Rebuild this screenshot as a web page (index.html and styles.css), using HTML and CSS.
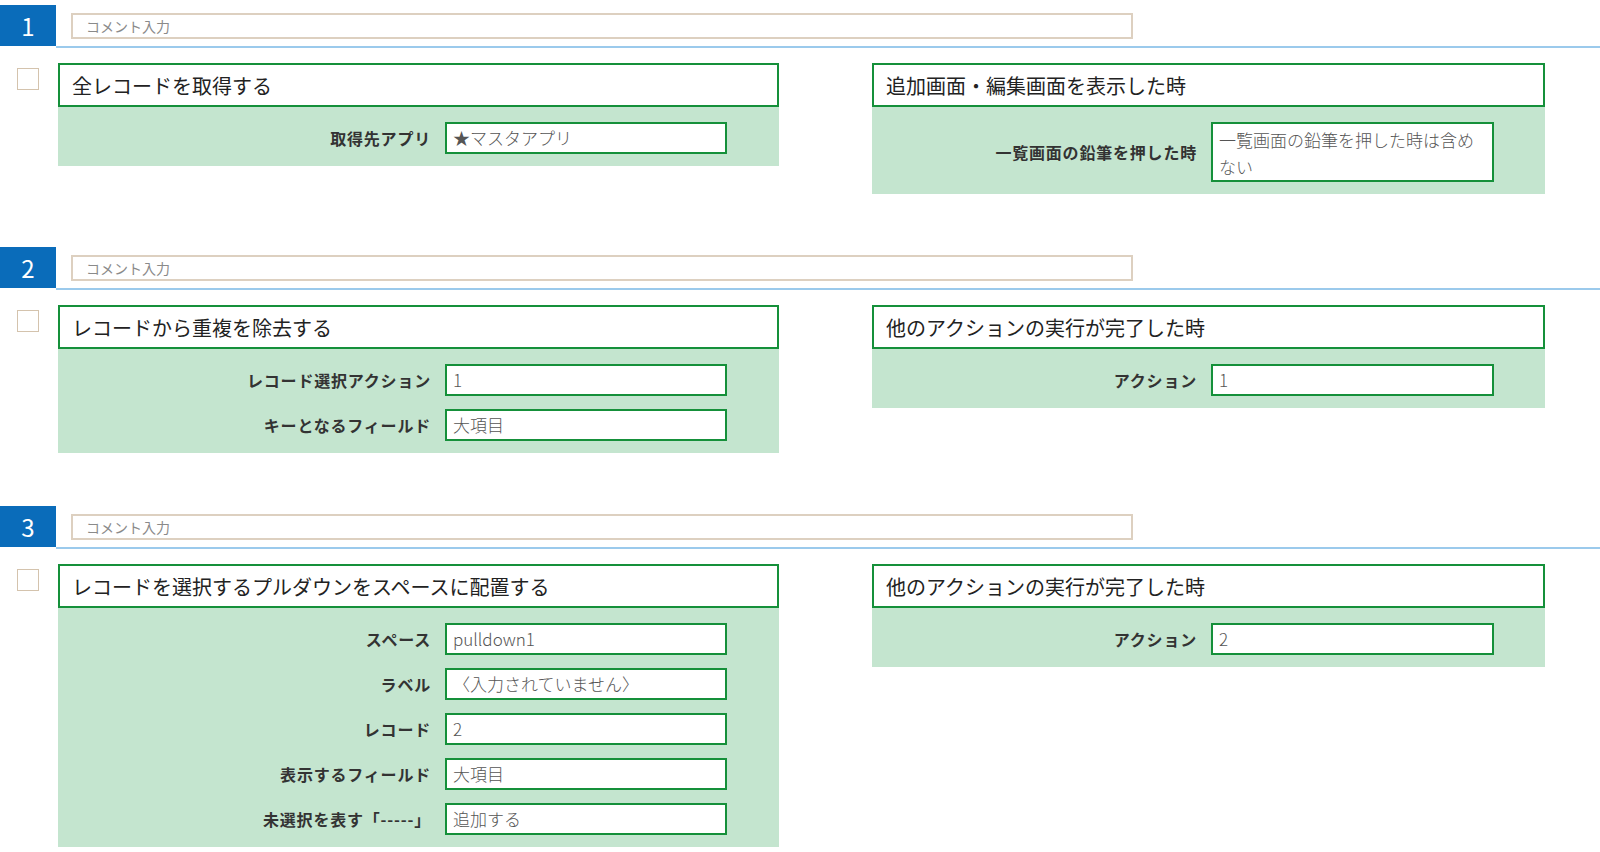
FILE: index.html
```html
<!DOCTYPE html>
<html lang="ja">
<head>
<meta charset="utf-8">
<title>Actions</title>
<link rel="stylesheet" href="styles.css">
</head>
<body>
<section class="step">
  <div class="step-head">
    <div class="step-num">1</div>
    <div class="step-line"><div class="comment">コメント入力</div></div>
  </div>
  <div class="step-body">
    <span class="check"></span>
    <div class="card card-action">
      <div class="card-title">全レコードを取得する</div>
      <div class="card-fields">
        <div class="field"><span class="label">取得先アプリ</span><span class="input">★マスタアプリ</span></div>
      </div>
    </div>
    <div class="card card-trigger">
      <div class="card-title">追加画面・編集画面を表示した時</div>
      <div class="card-fields">
        <div class="field"><span class="label">一覧画面の鉛筆を押した時</span><span class="input input-multi">一覧画面の鉛筆を押した時は含めない</span></div>
      </div>
    </div>
  </div>
</section>

<section class="step">
  <div class="step-head">
    <div class="step-num">2</div>
    <div class="step-line"><div class="comment">コメント入力</div></div>
  </div>
  <div class="step-body">
    <span class="check"></span>
    <div class="card card-action">
      <div class="card-title">レコードから重複を除去する</div>
      <div class="card-fields">
        <div class="field"><span class="label">レコード選択アクション</span><span class="input">1</span></div>
        <div class="field"><span class="label">キーとなるフィールド</span><span class="input">大項目</span></div>
      </div>
    </div>
    <div class="card card-trigger">
      <div class="card-title">他のアクションの実行が完了した時</div>
      <div class="card-fields">
        <div class="field"><span class="label">アクション</span><span class="input">1</span></div>
      </div>
    </div>
  </div>
</section>

<section class="step">
  <div class="step-head">
    <div class="step-num">3</div>
    <div class="step-line"><div class="comment">コメント入力</div></div>
  </div>
  <div class="step-body">
    <span class="check"></span>
    <div class="card card-action">
      <div class="card-title">レコードを選択するプルダウンをスペースに配置する</div>
      <div class="card-fields">
        <div class="field"><span class="label">スペース</span><span class="input">pulldown1</span></div>
        <div class="field"><span class="label">ラベル</span><span class="input">〈入力されていません〉</span></div>
        <div class="field"><span class="label">レコード</span><span class="input">2</span></div>
        <div class="field"><span class="label">表示するフィールド</span><span class="input">大項目</span></div>
        <div class="field"><span class="label">未選択を表す「-----」</span><span class="input">追加する</span></div>
      </div>
    </div>
    <div class="card card-trigger">
      <div class="card-title">他のアクションの実行が完了した時</div>
      <div class="card-fields">
        <div class="field"><span class="label">アクション</span><span class="input">2</span></div>
      </div>
    </div>
  </div>
</section>
</body>
</html>
```

FILE: styles.css
```css
html, body {
  margin: 0;
  padding: 0;
  background: #ffffff;
}

body {
  font-family: "Noto Sans CJK JP", "Noto Sans", sans-serif;
  color: #222;
  padding-top: 5px;
}

.step {
  margin-bottom: 53px;
}

.step-head {
  display: flex;
  align-items: flex-start;
}

.step-num {
  width: 56px;
  height: 41px;
  background: #0a6cba;
  color: #ffffff;
  font-size: 24px;
  display: flex;
  align-items: center;
  justify-content: center;
  flex: none;
}

.step-line {
  flex: 1;
  height: 43px;
  box-sizing: border-box;
  border-bottom: 2px solid #9bcaec;
  padding: 8px 0 0 15px;
}

.comment {
  width: 1062px;
  height: 26px;
  box-sizing: border-box;
  border: 2px solid #ddd0c0;
  padding-left: 13px;
  font-size: 14px;
  line-height: 22px;
  color: #8a8a8a;
}

.step-body {
  display: flex;
  align-items: flex-start;
  margin-top: 15px;
}

.check {
  width: 22px;
  height: 22px;
  box-sizing: border-box;
  border: 1px solid #d4c3ad;
  margin: 5px 0 0 17px;
  flex: none;
}

.card {
  flex: none;
}

.card-action {
  width: 721px;
  margin-left: 19px;
}

.card-trigger {
  width: 673px;
  margin-left: 93px;
}

.card-title {
  height: 44px;
  box-sizing: border-box;
  border: 2px solid #15903a;
  background: #ffffff;
  font-size: 20px;
  padding-left: 12px;
  display: flex;
  align-items: center;
  color: #222;
}

.card-fields {
  background: #c4e5cf;
  padding: 15px 0 12px;
  display: flex;
  flex-direction: column;
  gap: 13px;
}

.field {
  display: flex;
  align-items: center;
}

.label {
  flex: none;
  text-align: right;
  font-size: 16px;
  font-weight: bold;
  letter-spacing: 0.8px;
  color: #333;
  white-space: nowrap;
}

.card-action .label {
  width: 373px;
}

.card-trigger .label {
  width: 325px;
}

.input {
  flex: none;
  margin-left: 14px;
  width: 282px;
  height: 32px;
  box-sizing: border-box;
  border: 2px solid #15903a;
  background: #ffffff;
  padding: 0 6px;
  font-size: 17px;
  font-weight: 300;
  line-height: 28px;
  color: #555;
  white-space: nowrap;
  overflow: hidden;
}

.card-trigger .input {
  width: 283px;
}

.input-multi {
  height: 60px;
  white-space: normal;
  line-height: 27px;
  padding-top: 2px;
}
```
